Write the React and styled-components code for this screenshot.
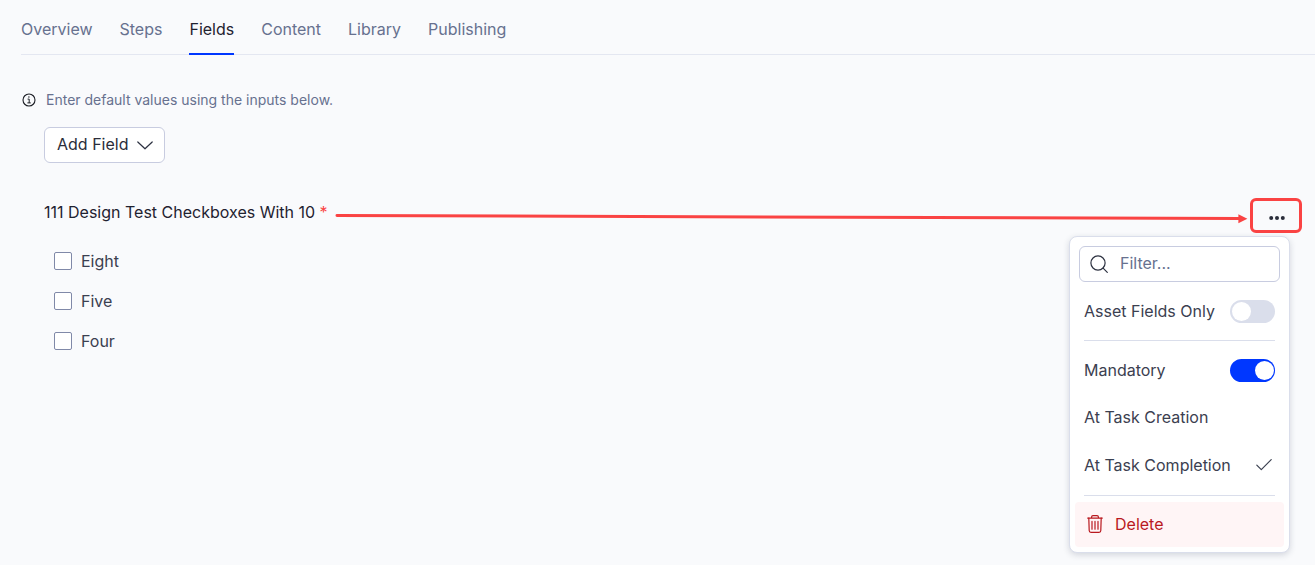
import React, { useState } from 'react';
import styled, { createGlobalStyle } from 'styled-components';

const tabs = ['Overview', 'Steps', 'Fields', 'Content', 'Library', 'Publishing'];
const options = ['Eight', 'Five', 'Four'];

function App() {
    const [active, setActive] = useState('Fields');
    const [assetOnly, setAssetOnly] = useState(false);
    const [mandatory, setMandatory] = useState(true);
    const [stage, setStage] = useState('At Task Completion');

    return (
        <Page>
            <GlobalStyle />
            <TabBar>
                {tabs.map((tab) => (
                    <Tab key={tab} href="#" $active={tab === active} onClick={() => setActive(tab)}>
                        {tab}
                    </Tab>
                ))}
            </TabBar>
            <Hint>
                <InfoIcon />
                <p>Enter default values using the inputs below.</p>
            </Hint>
            <Content>
                <AddButton type="button">
                    Add Field
                    <ChevronIcon />
                </AddButton>
                <FieldHeader>
                    <FieldTitle>
                        111 Design Test Checkboxes With 10 <Required>*</Required>
                    </FieldTitle>
                    <Arrow />
                    <MenuAnchor>
                        <MoreButton type="button" aria-label="Field options">
                            <DotsIcon />
                        </MoreButton>
                        <Menu>
                            <FilterBox>
                                <SearchIcon />
                                <FilterInput type="text" placeholder="Filter..." aria-label="Filter" />
                            </FilterBox>
                            <MenuGroup>
                                <SwitchRow>
                                    Asset Fields Only
                                    <Switch
                                        type="checkbox"
                                        role="switch"
                                        checked={assetOnly}
                                        onChange={(e) => setAssetOnly(e.target.checked)}
                                    />
                                </SwitchRow>
                            </MenuGroup>
                            <MenuGroup>
                                <SwitchRow>
                                    Mandatory
                                    <Switch
                                        type="checkbox"
                                        role="switch"
                                        checked={mandatory}
                                        onChange={(e) => setMandatory(e.target.checked)}
                                    />
                                </SwitchRow>
                                {['At Task Creation', 'At Task Completion'].map((name) => (
                                    <MenuItem key={name} type="button" onClick={() => setStage(name)}>
                                        {name}
                                        {stage === name && <CheckIcon />}
                                    </MenuItem>
                                ))}
                            </MenuGroup>
                            <DeleteButton type="button">
                                <TrashIcon />
                                Delete
                            </DeleteButton>
                        </Menu>
                    </MenuAnchor>
                </FieldHeader>
                <OptionList>
                    {options.map((option) => (
                        <Option key={option}>
                            <Checkbox type="checkbox" />
                            {option}
                        </Option>
                    ))}
                </OptionList>
            </Content>
        </Page>
    );
}

export default App;

function InfoIcon() {
    return (
        <svg width="14" height="14" viewBox="0 0 14 14" fill="none" stroke="#1b1d24" strokeWidth="1.1">
            <circle cx="7" cy="7" r="6" />
            <path d="M5.6 6.1h1.6v3.8M5.4 9.9h3.4" strokeWidth="1" />
            <circle cx="6.9" cy="4" r="0.7" fill="#1b1d24" stroke="none" />
        </svg>
    );
}

function ChevronIcon() {
    return (
        <svg width="16" height="10" viewBox="0 0 16 10" fill="none" stroke="#2c3140" strokeWidth="1.2" strokeLinecap="round" strokeLinejoin="round">
            <path d="M0.8 3L8 9.8l7.2-6.8" />
        </svg>
    );
}

function DotsIcon() {
    return (
        <svg width="16" height="4" viewBox="0 0 16 4" fill="#2a2d3a">
            <circle cx="2.2" cy="2" r="2" />
            <circle cx="8" cy="2" r="2" />
            <circle cx="13.8" cy="2" r="2" />
        </svg>
    );
}

function SearchIcon() {
    return (
        <svg width="18" height="18" viewBox="0 0 18 18" fill="none" stroke="#2c3140" strokeWidth="1.2" strokeLinecap="round">
            <circle cx="8" cy="8" r="7.1" />
            <path d="M13.1 13.1l4.2 4.2" />
        </svg>
    );
}

function CheckIcon() {
    return (
        <svg width="16" height="12" viewBox="0 0 16 12" fill="none" stroke="#3b4050" strokeWidth="1.2" strokeLinecap="round" strokeLinejoin="round">
            <path d="M0.8 6.1l4.5 4.5L15.2 0.7" />
        </svg>
    );
}

function TrashIcon() {
    return (
        <svg width="16" height="18" viewBox="0 0 16 18" fill="none" stroke="#b9191f" strokeWidth="1.2" strokeLinecap="round" strokeLinejoin="round">
            <path d="M0.7 3.1h14.6M4.6 3V2a1.4 1.4 0 0 1 1.4-1.4h4A1.4 1.4 0 0 1 11.4 2v1" />
            <path d="M1.8 3.2l0.4 12.4a1.8 1.8 0 0 0 1.8 1.8h8a1.8 1.8 0 0 0 1.8-1.8l0.4-12.4" />
            <path d="M5 6.4v7.8M8 6.4v7.8M11 6.4v7.8" />
        </svg>
    );
}

function Arrow() {
    return (
        <ArrowBox>
            <svg width="100%" height="12" aria-hidden="true">
                <line x1="1" y1="3.5" x2="99.3%" y2="6.5" stroke="#fa4343" strokeWidth="3" strokeLinecap="round" />
                <svg x="100%" overflow="visible">
                    <path d="M-9 2.2L0 6.7l-9 4.5z" fill="#fa4343" />
                </svg>
            </svg>
        </ArrowBox>
    );
}

const GlobalStyle = createGlobalStyle`
    * {
        box-sizing: border-box;
    }
    body {
        margin: 0;
        background: #f9fafc;
        color: #3b4050;
        font-family: Inter, sans-serif;
        font-size: 16px;
        line-height: 24px;
    }
    button, input {
        font: inherit;
        color: inherit;
    }
    svg {
        display: block;
        flex-shrink: 0;
        overflow: visible;
    }
`

const Page = styled.main`
    min-height: 100vh;
    padding-left: 21px;
`

const TabBar = styled.nav`
    display: flex;
    gap: 27px;
    height: 55px;
    border-bottom: 1px solid #e4e7f1;
`

const Tab = styled.a`
    height: 55px;
    padding-top: 17px;
    border-bottom: 2px solid ${(props) => (props.$active ? '#0037ff' : 'transparent')};
    color: ${(props) => (props.$active ? '#1f2230' : '#67718f')};
    text-decoration: none;
`

const Hint = styled.div`
    display: flex;
    align-items: center;
    gap: 10px;
    margin-top: 35px;
    padding-left: 1px;
    color: #67718f;
    font-size: 14px;
    line-height: 20px;

    p {
        margin: 0;
    }
`

const Content = styled.section`
    padding: 17px 13px 0 23px;
`

const AddButton = styled.button`
    display: flex;
    align-items: center;
    gap: 9px;
    height: 36px;
    padding: 0 11px 2px 12px;
    border: 1px solid #c8cce0;
    border-radius: 6px;
    background: white;
    color: #2a2d3a;
`

const FieldHeader = styled.div`
    display: flex;
    margin-top: 35px;
`

const FieldTitle = styled.h2`
    margin: 0;
    padding-top: 2px;
    color: #1f2230;
    font-size: 16px;
    font-weight: 400;
`

const Required = styled.span`
    color: #fa4343;
`

const ArrowBox = styled.div`
    flex: 1;
    margin: 14px 3px 0 8px;
`

const MenuAnchor = styled.div`
    position: relative;
`

const MoreButton = styled.button`
    display: flex;
    align-items: center;
    justify-content: center;
    width: 52px;
    height: 35px;
    padding: 4px 0 0 2px;
    border: 3px solid #fa4343;
    border-radius: 6px;
    background: transparent;
`

const Menu = styled.div`
    position: absolute;
    top: 38px;
    right: 12px;
    width: 221px;
    padding: 9px 5px 5px;
    border: 1px solid #dadeeb;
    border-radius: 8px;
    background: white;
    box-shadow: 0 2px 6px rgba(40, 50, 80, 0.18);
`

const FilterBox = styled.label`
    display: flex;
    align-items: center;
    gap: 12px;
    height: 36px;
    margin: 0 4px;
    padding: 0 10px;
    border: 1px solid #c8cce0;
    border-radius: 6px;
`

const FilterInput = styled.input`
    width: 100%;
    min-width: 0;
    padding: 0 0 2px;
    border: 0;
    outline: 0;
    background: transparent;

    &::placeholder {
        color: #67718f;
        opacity: 1;
    }
`

const MenuGroup = styled.div`
    margin: 0 9px;
    padding: 6px 0;
    border-bottom: 1px solid #dadeeb;
`

const SwitchRow = styled.label`
    display: flex;
    align-items: center;
    justify-content: space-between;
    height: 46px;
`

const Switch = styled.input`
    appearance: none;
    width: 45px;
    height: 23px;
    margin: 0;
    border-radius: 12px;
    background: #dadeeb;

    &::before {
        content: '';
        display: block;
        width: 19px;
        height: 19px;
        margin: 2px;
        border-radius: 50%;
        background: white;
    }
    &:checked {
        background: #0037ff;
    }
    &:checked::before {
        margin-left: 25px;
    }
`

const MenuItem = styled.button`
    display: flex;
    align-items: center;
    justify-content: space-between;
    width: 100%;
    height: 48px;
    padding: 0 3px 0 0;
    border: 0;
    background: none;
    text-align: left;
`

const DeleteButton = styled.button`
    display: flex;
    align-items: center;
    gap: 12px;
    width: 100%;
    height: 45px;
    margin-top: 6px;
    padding: 0 12px 1px;
    border: 0;
    border-radius: 4px;
    background: #fff5f6;
    color: #b9191f;
`

const OptionList = styled.div`
    display: flex;
    flex-direction: column;
    align-items: flex-start;
    gap: 16px;
    margin-top: 16px;
    padding-left: 10px;
`

const Option = styled.label`
    display: flex;
    align-items: center;
    gap: 9px;
`

const Checkbox = styled.input`
    appearance: none;
    width: 18px;
    height: 18px;
    margin: 0;
    border: 1px solid #8089a8;
    border-radius: 2px;
    background: white;

    &:checked {
        background: #0037ff;
    }
`
